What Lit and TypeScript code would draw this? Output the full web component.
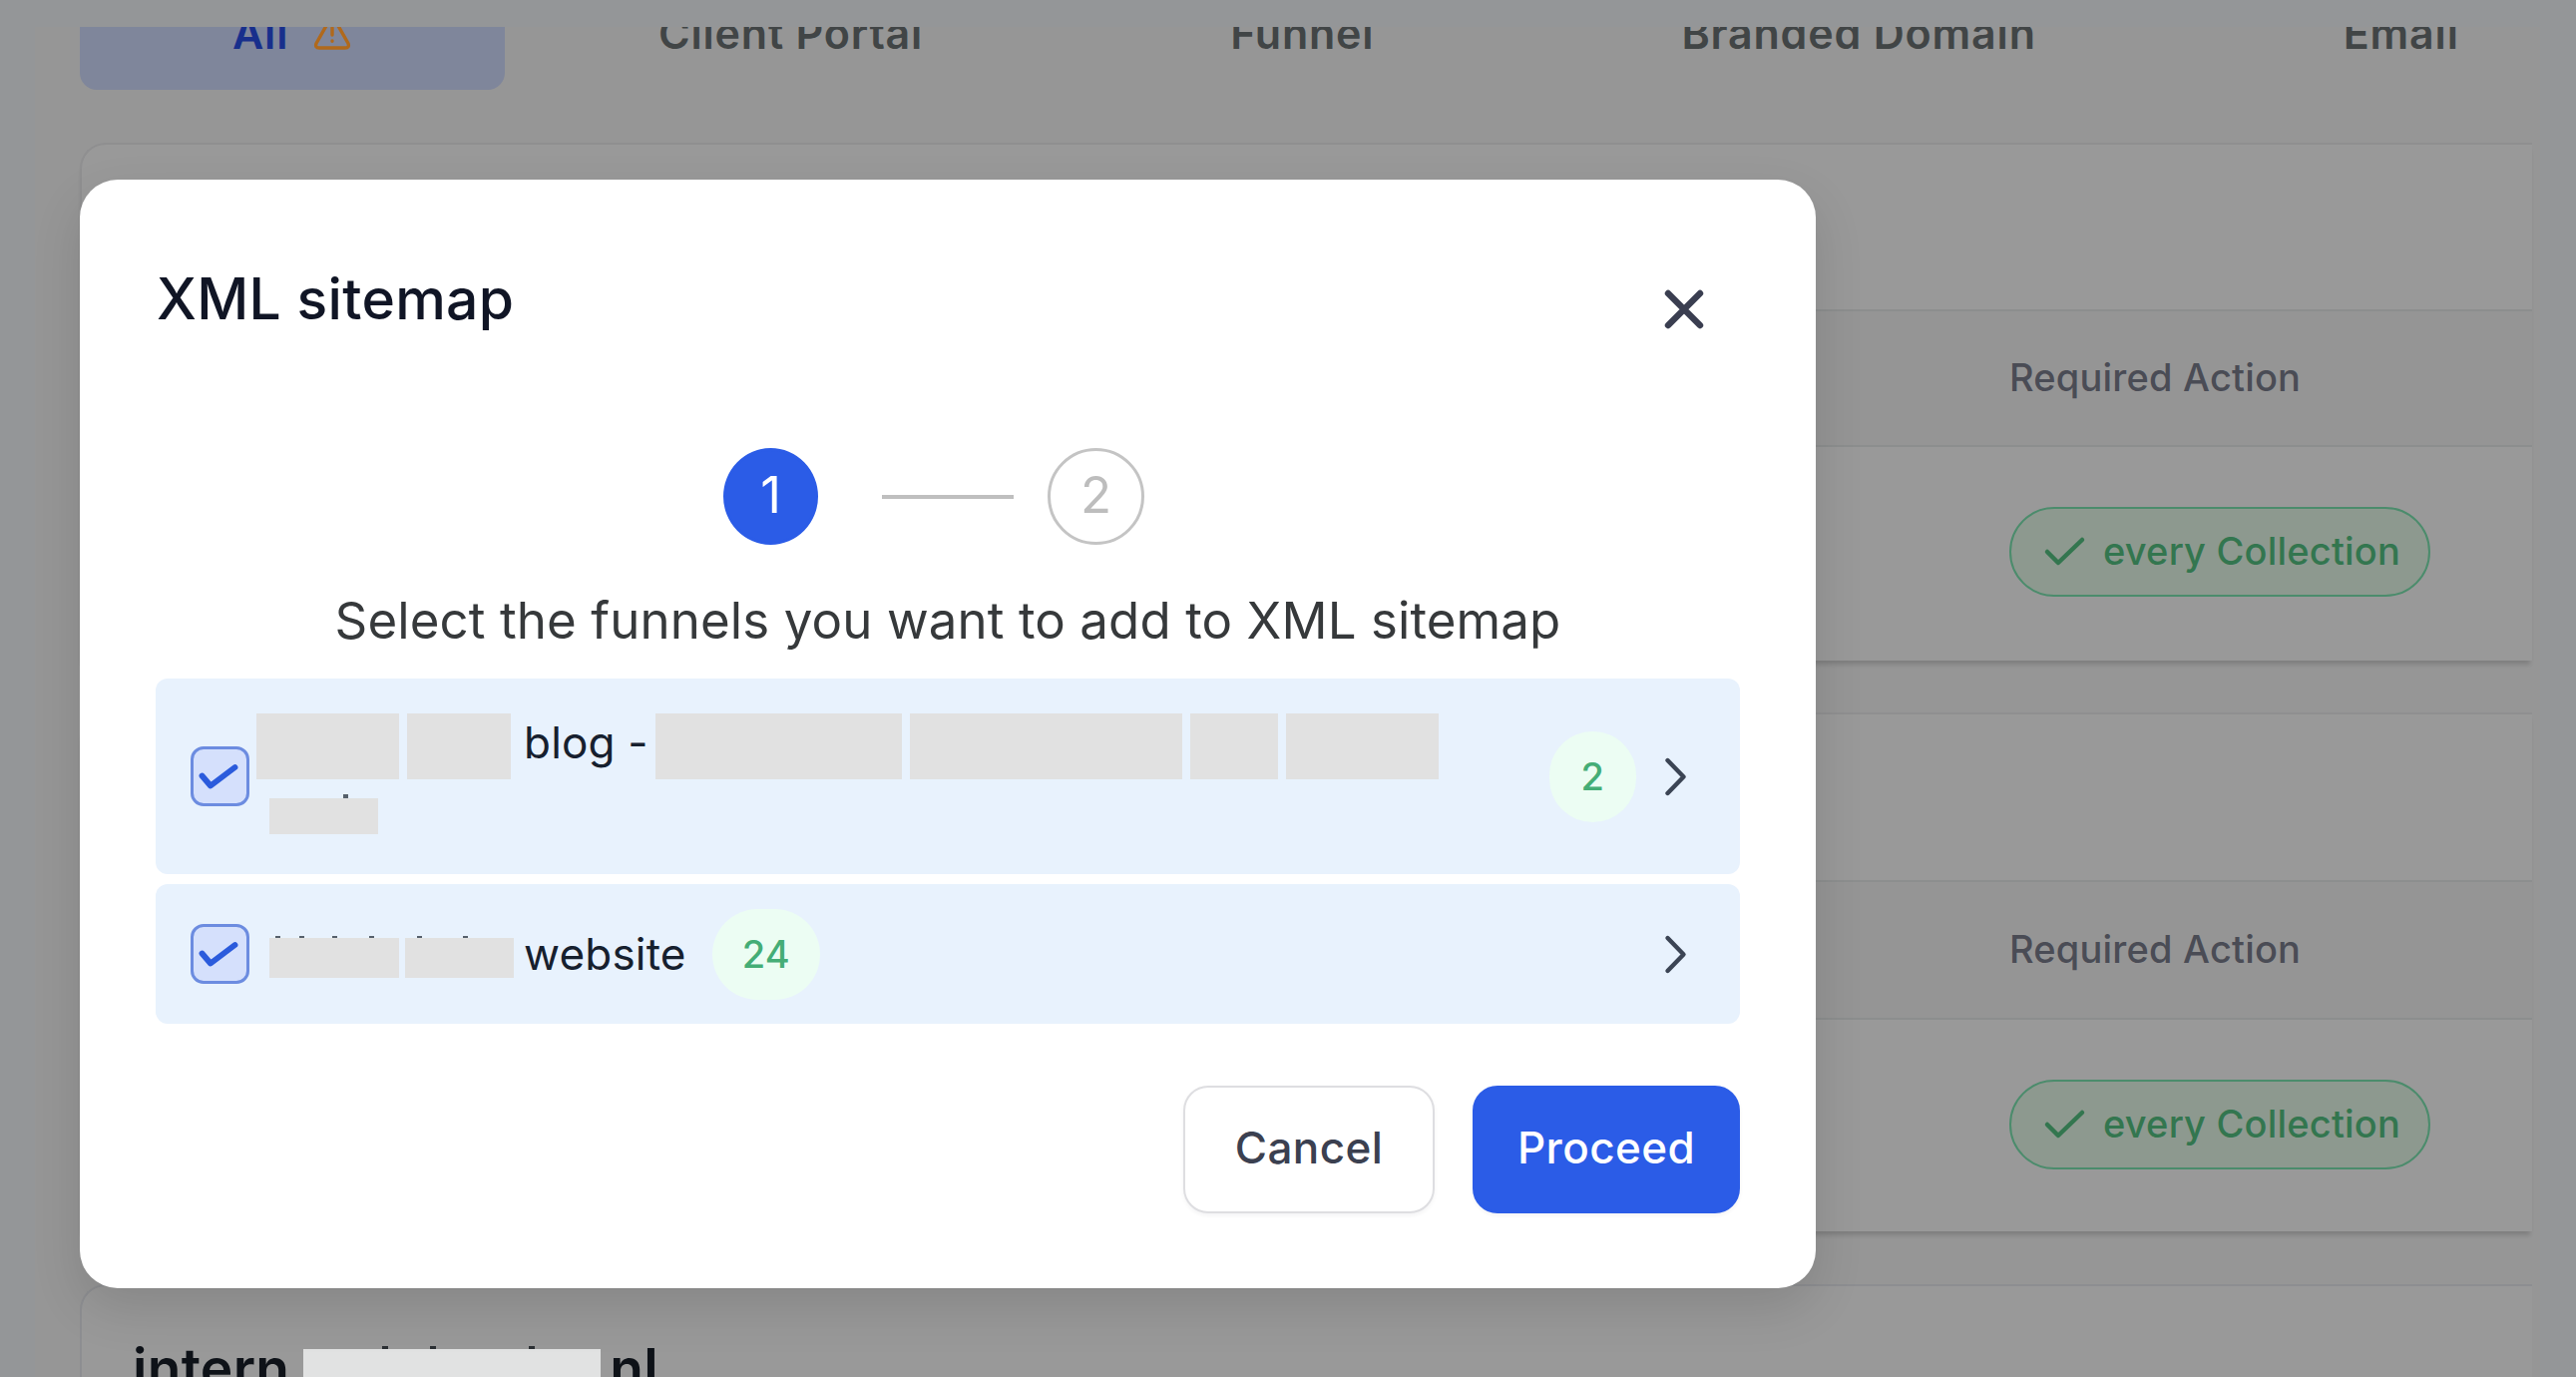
import {html, css, svg, LitElement} from 'lit';
import {customElement, property, state} from 'lit/decorators.js';

interface Part {
  text?: string;
  width?: number;
  gap?: number;
  specks?: number[];
}

interface Funnel {
  lines: Part[][];
  count: number;
  checked: boolean;
  tall: boolean;
}

@customElement('lk-check')
export class Check extends LitElement {
  static styles = css`
    :host {
      display: block;
      flex: none;
      box-sizing: border-box;
      width: 59px;
      height: 60px;
      border: 3px solid #6c8ce0;
      border-radius: 13px;
      background-color: #d5e0fc;
    }
    svg {
      display: block;
    }
  `;

  @property({type: Boolean}) checked = false;

  render() {
    return html`
      <svg width="52" height="54" viewBox="0 0 52 54" fill="none" stroke="#2b5bdc" stroke-width="5.8" stroke-linecap="round" stroke-linejoin="round">
        ${this.checked ? svg`<path d="M8.5 26.5 L17 36.5 L41.5 18" />` : null}
      </svg>
    `;
  }
}

@customElement('lk-domain-card')
export class DomainCard extends LitElement {
  static styles = css`
    :host {
      display: block;
      box-sizing: border-box;
      background-color: #999;
      border-top: 2px solid #8f8f90;
      border-left: 2px solid #8f8f90;
      border-radius: 26px 0 0 0;
      box-shadow: 0 6px 4px -2px rgba(0, 0, 0, 0.15);
    }
    .title {
      height: var(--title-height, 165px);
    }
    .head {
      box-sizing: border-box;
      height: var(--head-height, 138px);
      border: solid #8c8e8e;
      border-width: 2px 0;
      background-color: #959595;
      display: flex;
      align-items: center;
      padding: 0 0 2px 1932px;
      color: #4a4c55;
      font-weight: 500;
      font-size: 38px;
      letter-spacing: 0.2px;
    }
    .body {
      height: 214px;
      box-sizing: border-box;
      padding: 60px 0 0 1932px;
    }
    .pill {
      box-sizing: border-box;
      width: 422px;
      height: 90px;
      border: 2px solid #4b8c6c;
      border-radius: 45px;
      background-color: #8d998f;
      display: flex;
      align-items: center;
      gap: 17px;
      padding: 0 0 2px 32px;
      color: #33764f;
      font-weight: 500;
      font-size: 38px;
      letter-spacing: 0.2px;
      white-space: nowrap;
    }
  `;

  render() {
    return html`
      <div class="title"></div>
      <div class="head">Required Action</div>
      <div class="body">
        <div class="pill">
          <svg width="43" height="34" viewBox="0 0 43 34" fill="none" stroke="#33764f" stroke-width="4.5" stroke-linecap="round" stroke-linejoin="round">
            <path d="M4 18 L15 29 L39 6" />
          </svg>
          <span>every Collection</span>
        </div>
      </div>
    `;
  }
}

@customElement('lk-sitemap-dialog')
export class SitemapDialog extends LitElement {
  static styles = css`
    :host {
      display: flex;
      flex-direction: column;
      box-sizing: border-box;
      width: 1740px;
      height: 1111px;
      padding: 84px 76px 75px;
      border-radius: 38px;
      background-color: #fff;
      box-shadow: 0 20px 50px rgba(0, 0, 0, 0.12);
    }
    svg {
      display: block;
      flex: none;
    }
    .header {
      display: flex;
      justify-content: space-between;
      align-items: flex-start;
      height: 184px;
      padding: 0 34px 0 1px;
    }
    .title {
      font-weight: 500;
      font-size: 57px;
      line-height: 71px;
      letter-spacing: 0.3px;
      color: #101525;
    }
    .close {
      margin-top: 24px;
    }
    .steps {
      display: flex;
      align-items: center;
      height: 98px;
      padding-left: 569px;
    }
    .step {
      box-sizing: border-box;
      width: 97px;
      height: 97px;
      padding-bottom: 3px;
      border: 3px solid #c4c4c4;
      border-radius: 50%;
      display: flex;
      align-items: center;
      justify-content: center;
      font-size: 51px;
      color: #bdbdbd;
    }
    .step[data-current] {
      width: 95px;
      border-color: #2b5ce7;
      background-color: #2b5ce7;
      color: #fff;
    }
    .line {
      width: 132px;
      height: 4px;
      margin: 2px 34px 0 64px;
      background-color: #bfbfbf;
    }
    .caption {
      height: 60px;
      line-height: 62px;
      margin: 45px 0 29px;
      text-align: center;
      font-size: 51px;
      letter-spacing: 0.1px;
      color: #36393b;
      white-space: nowrap;
    }
    .list {
      display: flex;
      flex-direction: column;
      gap: 10px;
    }
    .row {
      box-sizing: border-box;
      height: 140px;
      padding: 0 50px 0 35px;
      border-radius: 12px;
      background-color: #e8f2fd;
      display: flex;
      align-items: center;
      font-size: 44px;
      color: #16202e;
    }
    .row[data-tall] {
      height: 196px;
    }
    .name {
      height: 100%;
      display: flex;
      flex-direction: column;
      justify-content: center;
      margin-left: 20px;
    }
    .row[data-tall] .name {
      flex: 1;
      justify-content: flex-start;
      box-sizing: border-box;
      padding-top: 35px;
      margin-left: 7px;
    }
    .words {
      display: flex;
      align-items: center;
      height: 66px;
      white-space: nowrap;
    }
    .words > span {
      letter-spacing: 0.2px;
    }
    .row[data-tall] .words > span {
      margin-bottom: 8px;
    }
    .words:nth-child(2) {
      height: 36px;
      margin-top: 19px;
    }
    .words:nth-child(2) .mask {
      height: 36px;
    }
    .row:not([data-tall]) .words {
      height: 40px;
    }
    .mask {
      position: relative;
      height: 66px;
      background-color: #e1e1e1;
    }
    .row:not([data-tall]) .mask {
      height: 40px;
      margin-top: 8px;
    }
    /* tips of the covered letters */
    .mask i {
      position: absolute;
      top: -4px;
      width: 5px;
      height: 4px;
      background-color: #56606b;
    }
    .row:not([data-tall]) .mask i {
      top: -2px;
      height: 2px;
    }
    .count {
      flex: none;
      height: 91px;
      min-width: 84px;
      box-sizing: border-box;
      padding: 0 32px;
      border-radius: 46px;
      background-color: #ecfdf3;
      display: flex;
      align-items: center;
      justify-content: center;
      font-weight: 500;
      font-size: 38px;
      color: #45ad76;
    }
    .row:not([data-tall]) .count {
      width: 108px;
      margin: 0 auto 0 26px;
    }
    .row[data-tall] .count {
      margin-right: 26px;
    }
    .footer {
      display: flex;
      justify-content: flex-end;
      gap: 38px;
      margin-top: 62px;
    }
    button {
      box-sizing: border-box;
      width: 252px;
      height: 128px;
      padding: 0 0 4px;
      border: 2px solid #dedee1;
      border-radius: 25px;
      background-color: #fff;
      font-family: inherit;
      font-weight: 500;
      font-size: 44px;
      letter-spacing: 0.4px;
      color: #3b4050;
      box-shadow: 0 2px 4px rgba(16, 24, 40, 0.05);
    }
    button.primary {
      width: 268px;
      border-color: #2b5ce7;
      background-color: #2b5ce7;
      color: #fff;
    }
  `;

  @state() funnels: Funnel[] = [
    {
      lines: [
        [
          {width: 143}, {width: 104, gap: 8}, {text: 'blog -', gap: 13}, {width: 247, gap: 7},
          {width: 273, gap: 8}, {width: 88, gap: 8}, {width: 153, gap: 8}
        ],
        [{width: 109, gap: 13, specks: [74]}]
      ],
      count: 2,
      checked: true,
      tall: true
    },
    {
      lines: [[
        {width: 130, specks: [6, 30, 63, 100]},
        {width: 109, gap: 6, specks: [12, 58]},
        {text: 'website', gap: 10}
      ]],
      count: 24,
      checked: true,
      tall: false
    }
  ];

  render() {
    return html`
      <div class="header">
        <span class="title">XML sitemap</span>
        <svg class="close" width="44" height="44" viewBox="0 0 44 44" stroke="#3a3e50" stroke-width="6.4" stroke-linecap="round">
          <path d="M6 6 L38 38 M38 6 L6 38" />
        </svg>
      </div>
      <div class="steps">
        <span class="step" data-current>1</span>
        <i class="line"></i>
        <span class="step">2</span>
      </div>
      <div class="caption">Select the funnels you want to add to XML sitemap</div>
      <div class="list">
        ${this.funnels.map(funnel => this.getRowHtml(funnel))}
      </div>
      <div class="footer">
        <button>Cancel</button>
        <button class="primary">Proceed</button>
      </div>
    `;
  }

  getRowHtml(funnel: Funnel) {
    return html`
      <div class="row" ?data-tall=${funnel.tall}>
        <lk-check ?checked=${funnel.checked} @click=${this.toggle(funnel)}></lk-check>
        <div class="name">
          ${funnel.lines.map(line => html`<div class="words">${line.map(part => this.getPartHtml(part))}</div>`)}
        </div>
        <span class="count">${funnel.count}</span>
        <svg width="28" height="44" viewBox="0 0 28 44" fill="none" stroke="#3b4454" stroke-width="4.4" stroke-linecap="round" stroke-linejoin="round">
          <path d="M5.5 6 L21.5 22.5 L5.5 39" />
        </svg>
      </div>
    `;
  }

  getPartHtml(part: Part) {
    if (part.text) {
      return html`<span style="margin-left: ${part.gap ?? 0}px">${part.text}</span>`;
    }
    return html`
      <div class="mask" style="width: ${part.width}px; margin-left: ${part.gap ?? 0}px">
        ${(part.specks ?? []).map(x => html`<i style="left: ${x}px"></i>`)}
      </div>
    `;
  }

  toggle(funnel: Funnel) {
    return () => {
      funnel.checked = !funnel.checked;
      this.funnels = this.funnels.slice();
    };
  }
}

@customElement('app-root')
export class AppRoot extends LitElement {
  static styles = css`
    :host {
      display: block;
      position: relative;
      width: 2582px;
      height: 1380px;
      overflow: hidden;
      background-color: #949698;
      font-family: Inter, 'Liberation Sans', sans-serif;
    }
    .page {
      box-sizing: border-box;
      height: 1353px;
      margin: 0 36px 0 35px;
      padding: 0 8px 0 45px;
      background-color: #969696;
    }
    .top {
      height: 27px;
    }
    .tabs {
      display: flex;
      align-items: flex-end;
      height: 63px;
      overflow: hidden;
      margin-bottom: 53px;
    }
    .tab {
      flex: none;
      display: flex;
      align-items: center;
      gap: 25px;
      height: 115px;
      padding: 0 154px;
      border-radius: 17px;
      font-weight: 600;
      font-size: 43px;
      letter-spacing: 0.8px;
      color: #414546;
      white-space: nowrap;
    }
    .tab[data-current] {
      box-sizing: border-box;
      width: 426px;
      padding: 0 0 0 153px;
      background-color: #7f869b;
      color: #182f8c;
    }
    lk-domain-card {
      height: 519px;
      margin-bottom: 52px;
    }
    lk-domain-card + lk-domain-card {
      --title-height: 166px;
      --head-height: 140px;
      height: 520px;
      margin-bottom: 53px;
    }
    .partial {
      box-sizing: border-box;
      height: 100px;
      padding: 62px 0 0 51px;
      border: solid #8d8e91;
      border-width: 2px 0 0 2px;
      border-radius: 26px 0 0 0;
      background-color: #999;
      display: flex;
      align-items: flex-start;
      font-weight: 600;
      font-size: 55px;
      line-height: 40px;
      letter-spacing: 0.3px;
      color: #0e1218;
    }
    .cover {
      position: relative;
      width: 298px;
      height: 40px;
      margin: 1px 9px 0 14px;
      background-color: #e1e2e2;
    }
    .cover i {
      position: absolute;
      top: -3px;
      width: 6px;
      height: 3px;
      background-color: #2c3034;
    }
    lk-sitemap-dialog {
      position: absolute;
      left: 80px;
      top: 180px;
    }
  `;

  render() {
    return html`
      <div class="top"></div>
      <div class="page">
        <div class="tabs">
          <div class="tab" data-current>
            All
            <svg width="38" height="36" viewBox="0 0 38 36" fill="none" stroke="#b0691c" stroke-width="3.4" stroke-linecap="round" stroke-linejoin="round">
              <path d="M16.6 4.5 L3 28.5 Q1.5 33 6 33 H32 Q36.5 33 35 28.5 L21.4 4.5 Q19 1.5 16.6 4.5 Z M19 13 V20 M19 26 V26.2" />
            </svg>
          </div>
          <div class="tab">Client Portal</div>
          <div class="tab">Funnel</div>
          <div class="tab">Branded Domain</div>
          <div class="tab">Email</div>
        </div>
        <lk-domain-card></lk-domain-card>
        <lk-domain-card></lk-domain-card>
        <div class="partial">
          <span>intern</span>
          <div class="cover"><i style="left: 79px"></i><i style="left: 127px"></i><i style="left: 226px"></i></div>
          <span>nl</span>
        </div>
      </div>
      <lk-sitemap-dialog></lk-sitemap-dialog>
    `;
  }
}
